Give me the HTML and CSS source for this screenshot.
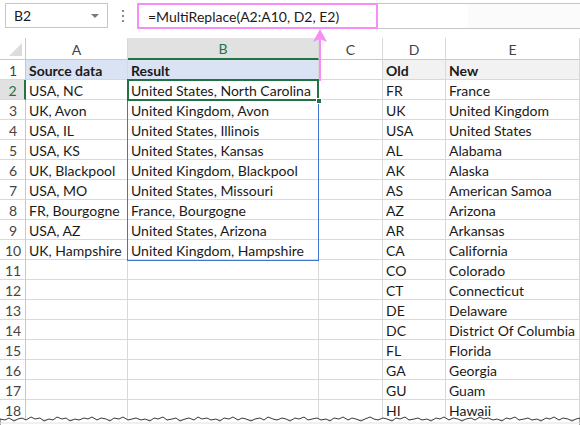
FILE: index.html
```html
<!DOCTYPE html>
<html>
<head>
<meta charset="utf-8">
<link rel="stylesheet" href="styles.css">
</head>
<body>
<div class="page">
  <div class="fbar">
    <div class="namebox"><span class="nb-text">B2</span><span class="nb-arrow"></span></div>
    <div class="dots"><i></i><i></i><i></i></div>
    <div class="formula">=MultiReplace(A2:A10, D2, E2)</div>
    <div class="formula-rest"></div>
  </div>
  <div class="sheet">
    <div class="corner"><span class="tri"></span></div>
    <div class="ch">A</div><div class="ch ch-sel">B</div><div class="ch">C</div><div class="ch">D</div><div class="ch">E</div>

    <div class="rh">1</div><div class="c hb b">Source data</div><div class="c hb b">Result</div><div class="c"></div><div class="c hg b">Old</div><div class="c hg b">New</div>
    <div class="rh rh-sel">2</div><div class="c">USA, NC</div><div class="c">United States, North Carolina</div><div class="c"></div><div class="c">FR</div><div class="c">France</div>
    <div class="rh">3</div><div class="c">UK, Avon</div><div class="c">United Kingdom, Avon</div><div class="c"></div><div class="c">UK</div><div class="c">United Kingdom</div>
    <div class="rh">4</div><div class="c">USA, IL</div><div class="c">United States, Illinois</div><div class="c"></div><div class="c">USA</div><div class="c">United States</div>
    <div class="rh">5</div><div class="c">USA, KS</div><div class="c">United States, Kansas</div><div class="c"></div><div class="c">AL</div><div class="c">Alabama</div>
    <div class="rh">6</div><div class="c">UK, Blackpool</div><div class="c">United Kingdom, Blackpool</div><div class="c"></div><div class="c">AK</div><div class="c">Alaska</div>
    <div class="rh">7</div><div class="c">USA, MO</div><div class="c">United States, Missouri</div><div class="c"></div><div class="c">AS</div><div class="c">American Samoa</div>
    <div class="rh">8</div><div class="c">FR, Bourgogne</div><div class="c">France, Bourgogne</div><div class="c"></div><div class="c">AZ</div><div class="c">Arizona</div>
    <div class="rh">9</div><div class="c">USA, AZ</div><div class="c">United States, Arizona</div><div class="c"></div><div class="c">AR</div><div class="c">Arkansas</div>
    <div class="rh">10</div><div class="c">UK, Hampshire</div><div class="c">United Kingdom, Hampshire</div><div class="c"></div><div class="c">CA</div><div class="c">California</div>
    <div class="rh">11</div><div class="c"></div><div class="c"></div><div class="c"></div><div class="c">CO</div><div class="c">Colorado</div>
    <div class="rh">12</div><div class="c"></div><div class="c"></div><div class="c"></div><div class="c">CT</div><div class="c">Connecticut</div>
    <div class="rh">13</div><div class="c"></div><div class="c"></div><div class="c"></div><div class="c">DE</div><div class="c">Delaware</div>
    <div class="rh">14</div><div class="c"></div><div class="c"></div><div class="c"></div><div class="c">DC</div><div class="c">District Of Columbia</div>
    <div class="rh">15</div><div class="c"></div><div class="c"></div><div class="c"></div><div class="c">FL</div><div class="c">Florida</div>
    <div class="rh">16</div><div class="c"></div><div class="c"></div><div class="c"></div><div class="c">GA</div><div class="c">Georgia</div>
    <div class="rh">17</div><div class="c"></div><div class="c"></div><div class="c"></div><div class="c">GU</div><div class="c">Guam</div>
    <div class="rh">18</div><div class="c"></div><div class="c"></div><div class="c"></div><div class="c">HI</div><div class="c">Hawaii</div>

    <div class="range"></div>
    <div class="active"><span class="handle"></span></div>
  </div>

  <svg class="arrow" width="20" height="52" viewBox="0 0 20 52">
    <line x1="10" y1="8" x2="10" y2="52" stroke="#f78ef7" stroke-width="2"/>
    <path d="M10 0 L17 13 L10 10 L3 13 Z" fill="#f78ef7"/>
  </svg>

  <svg class="torn" width="580" height="22" viewBox="0 0 580 22">
    <path d="M0 10 L5 11 L9 9 L14 12 L18 10 L22 9 L26 11 L31 8 L35 10 L40 9 L44 12 L49 10 L53 11 L57 8 L62 10 L66 9 L70 12 L75 10 L79 11 L84 9 L88 10 L92 8 L97 11 L101 9 L106 10 L110 12 L114 9 L119 10 L123 8 L128 11 L132 10 L136 9 L141 11 L145 10 L150 12 L154 9 L158 10 L163 8 L167 11 L172 10 L176 9 L180 12 L185 10 L189 9 L194 11 L198 8 L202 10 L207 9 L211 11 L216 10 L220 12 L224 9 L229 10 L233 8 L238 11 L242 9 L246 10 L251 12 L255 10 L260 9 L264 11 L268 8 L273 10 L277 11 L282 9 L286 10 L290 12 L295 9 L299 10 L304 8 L308 11 L312 10 L317 9 L321 11 L326 10 L330 12 L334 9 L339 10 L343 8 L348 11 L352 9 L356 10 L361 12 L365 10 L370 8 L374 10 L378 11 L383 9 L387 10 L392 12 L396 9 L400 10 L405 8 L409 11 L414 10 L418 9 L422 11 L427 10 L431 12 L436 9 L440 10 L444 8 L449 11 L453 9 L458 10 L462 12 L466 10 L471 9 L475 11 L480 8 L484 10 L488 9 L493 11 L497 10 L502 12 L506 9 L510 10 L515 8 L519 11 L524 10 L528 9 L532 11 L537 10 L541 12 L546 9 L550 10 L554 8 L559 11 L563 9 L568 10 L572 12 L576 10 L580 9 L580 22 L0 22 Z" fill="#ffffff" stroke="#3a3a3a" stroke-width="1"/>
    <rect x="0" y="13" width="580" height="2" fill="#e6e6e6" opacity="0.6"/>
  </svg>
</div>
</body>
</html>
```
FILE: styles.css
```css
* { box-sizing: border-box; }
html, body { margin: 0; padding: 0; background: #fff; }
body { width: 580px; height: 425px; overflow: hidden; font-family: Lato, "Open Sans", sans-serif; color: #1a1a1a; }
.page { position: relative; width: 580px; height: 425px; overflow: hidden; }

.fbar { height: 38px; display: flex; align-items: flex-start; padding-top: 3px; }
.namebox { width: 103px; height: 25px; margin-left: 5px; border: 1px solid #c6c6c6; display: flex; align-items: center; justify-content: space-between; padding: 0 8px 0 8px; font-size: 14px; }
.nb-arrow { width: 0; height: 0; border-left: 4px solid transparent; border-right: 4px solid transparent; border-top: 4px solid #7a7a7a; }
.dots { width: 29px; height: 25px; display: flex; flex-direction: column; align-items: center; justify-content: center; gap: 3px; }
.dots i { display: block; width: 2px; height: 2px; background: #8a8a8a; }
.formula { width: 241px; height: 26px; border: 2px solid #f78ef7; padding-left: 9px; display: flex; align-items: center; font-size: 14px; }
.formula-rest { flex: 1; height: 26px; border-top: 1px solid #c6c6c6; border-bottom: 1px solid #c6c6c6; background: linear-gradient(to right, #fff 0, #fff 90px, #fbfbfb 90px); }

.sheet { position: relative; display: grid; grid-template-columns: 26px 102px 191px 64px 63px 134px; grid-template-rows: 22px repeat(18, 20px); font-size: 14px; }
.corner { border-right: 1px solid #c8c8c8; border-bottom: 1px solid #c8c8c8; position: relative; }
.tri { position: absolute; right: 3px; bottom: 3px; width: 0; height: 0; border-left: 13px solid transparent; border-bottom: 13px solid #dcdcdc; }
.ch { border-right: 1px solid #d9d9d9; border-bottom: 1px solid #c8c8c8; display: flex; align-items: center; justify-content: center; color: #444; font-size: 14px; padding-top: 1px; }
.ch-sel { background: #e1e1e1; color: #217346; border-bottom: 2px solid #217346; }
.rh { border-right: 1px solid #c8c8c8; border-bottom: 1px solid #d9d9d9; display: flex; align-items: center; justify-content: center; color: #444; font-size: 14px; padding-left: 1px; padding-top: 1px; }
.rh-sel { background: #e1e1e1; color: #217346; border-right: 2px solid #217346; }
.c { border-right: 1px solid #d9d9d9; border-bottom: 1px solid #d9d9d9; padding-left: 3px; padding-top: 1px; display: flex; align-items: center; white-space: nowrap; overflow: hidden; }
.hb { background: #dae3f3; }
.hg { background: #f2f2f2; }
.b { font-weight: 700; }

.range { position: absolute; left: 127px; top: 41px; width: 192px; height: 182px; border: 1px solid #3f76d0; pointer-events: none; }
.active { position: absolute; left: 127px; top: 41px; width: 192px; height: 22px; border: 2px solid #217346; }
.handle { position: absolute; right: -5px; bottom: -5px; width: 6px; height: 6px; background: #217346; border: 1px solid #fff; }

.arrow { position: absolute; left: 310px; top: 29px; }
.torn { position: absolute; left: 0; top: 409px; }
```
